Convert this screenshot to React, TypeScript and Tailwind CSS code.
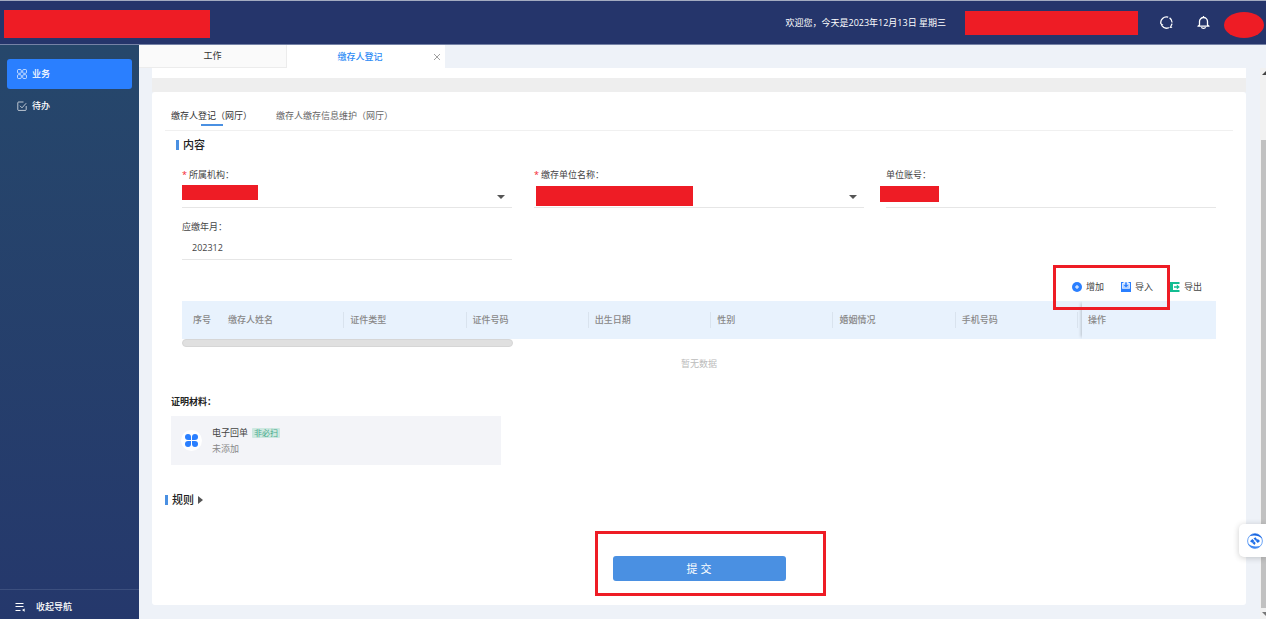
import { useState } from "react";
import type { ReactNode } from "react";

const COLUMNS = ["缴存人姓名", "证件类型", "证件号码", "出生日期", "性别", "婚姻情况", "手机号码"];

const FORM_TABS = ["缴存人登记（网厅）", "缴存人缴存信息维护（网厅）"];

function GridIcon() {
  return (
    <svg className="size-[10px]" viewBox="0 0 10 10" fill="none" stroke="currentColor" strokeWidth="0.7">
      <rect x="0.5" y="0.5" width="3.8" height="3.8" rx="1" />
      <rect x="5.7" y="0.5" width="3.8" height="3.8" rx="1" />
      <rect x="0.5" y="5.7" width="3.8" height="3.8" rx="1" />
      <rect x="5.7" y="5.7" width="3.8" height="3.8" rx="1" />
    </svg>
  );
}

function TodoIcon() {
  return (
    <svg className="size-[10px]" viewBox="0 0 10 10" fill="none" stroke="currentColor" strokeWidth="0.7">
      <path d="M6.5 1H1.6a.8.8 0 0 0-.8.8v6.800a.8.8 0 0 0 .8.8h6.800a.8.8 0 0 0 .8-.8V5" />
      <path d="M3 4.8l2 2 4.2-4.6" />
    </svg>
  );
}

function CollapseIcon() {
  return (
    <svg className="size-[10px]" viewBox="0 0 10 10" fill="none" stroke="currentColor">
      <path d="M0.5 1.5h8M0.5 4.5h8M0.5 8.5h5" />
      <path d="M9.6 6.4v3.4L7 8.1z" fill="currentColor" stroke="none" />
    </svg>
  );
}

function RefreshIcon() {
  return (
    <svg className="size-[13px]" viewBox="0 0 13 13" fill="none" stroke="currentColor" strokeWidth="1.3">
      <path d="M1 8A5.600 5.600 0 0 1 8.200 1.200" />
      <path d="M9.600 1.900A5.600 5.600 0 0 1 12.100 6.400" />
      <path d="M12 7.600A5.600 5.600 0 0 1 11 9.800" />
      <path d="M8.800 11.600A5.600 5.600 0 0 1 1.900 9.700" />
      <path d="M0.800 7.200l2.600 1.600-2.400 1.200zM12.400 11.800l-3.200.2 1.600-2.600z" fill="currentColor" stroke="none" />
    </svg>
  );
}

function BellIcon() {
  return (
    <svg className="size-[13px]" viewBox="0 0 13 13" fill="none" stroke="currentColor" strokeWidth="1.3">
      <path d="M6.5 0v1.500M2.500 9V5.500a4 4 0 0 1 8 0V9l1.500 1.200H1z" strokeLinejoin="round" />
      <path d="M4.400 11.300a2.200 1.500 0 0 0 4.200 0" />
    </svg>
  );
}

function AddIcon() {
  return (
    <svg className="size-[10px]" viewBox="0 0 10 10">
      <circle cx="5" cy="5" r="5" fill="#2a7fff" />
      <path d="M5 3v4M3 5h4" stroke="#fff" />
    </svg>
  );
}

function ImportIcon() {
  return (
    <svg className="size-[10px]" viewBox="0 0 10 10">
      <path d="M0 0h2.500v1H1.200v5.800h7.600V1H7.500V0H10v10H0z" fill="#2a7fff" />
      <path d="M2 1.800h1.600V0h2.800v1.800H8v4.400H2z" fill="#2a7fff" opacity="0.35" />
      <path d="M4.300 0.500h1.400v2.500h1.600L5 5.600 2.700 3h1.600z" fill="#2a7fff" />
    </svg>
  );
}

function ExportIcon() {
  return (
    <svg className="size-[10px]" viewBox="0 0 10 10">
      <path d="M0 0h9.500v2H3v6h6.500v2H0z" fill="#12bd92" />
      <path d="M4 4.200h2.800V2.600L9.800 5 6.800 7.400V5.800H4z" fill="#12bd92" />
    </svg>
  );
}

function CloverIcon() {
  return (
    <svg className="size-[13px]" viewBox="0 0 13 13" fill="#2a7fff">
      <path d="M3 0a3 3 0 0 1 3 3v3H3a3 3 0 0 1 0-6z" />
      <path d="M10 0a3 3 0 0 1 0 6H7V3a3 3 0 0 1 3-3z" />
      <path d="M3 7h3v3a3 3 0 1 1-3-3z" />
      <path d="M7 7h3a3 3 0 1 1-3 3z" />
    </svg>
  );
}

function AssistantIcon() {
  return (
    <svg className="size-4" viewBox="0 0 16 16" fill="none">
      <circle cx="8" cy="8" r="7.4" stroke="#5b9bf5" strokeWidth="0.9" />
      <path d="M2.500 3.200C5 .2 10-.4 13.200 2.800c1 1 1.600 2 1.900 3C12 2.600 7.500 1.800 2.500 3.200z" fill="#1764e0" />
      <path d="M13.500 12.800C11 15.800 6 16.400 2.800 13.200c-1-1-1.600-2-1.900-3C4 13.400 8.500 14.200 13.500 12.800z" fill="#3d87f2" />
      <path d="M3 8.300L5.400 6l2 2-2 2zM6.500 5.500L8.500 4.200l1.600 2.200-1.300 1.300zM7.200 8.400l1.500 1.500-1.200 2-2-1.600zM8.800 8l2-2L13 8.100l-2.200 2z" fill="#1f6fe8" />
    </svg>
  );
}

function SectionTitle({ children }: { children: ReactNode }) {
  return (
    <h2 className="flex items-center gap-1 text-[11px] leading-4 font-medium text-[#222]">
      <span className="w-[3px] h-[10px] bg-[#4a90e2]" />
      {children}
    </h2>
  );
}

function FieldLabel({ id, required, children }: { id: string; required?: boolean; children: ReactNode }) {
  return (
    <label htmlFor={id} className="flex gap-0.5 leading-4 text-[#444]">
      {required && <span className="text-[#f5222d]">*</span>}
      {children}
    </label>
  );
}

function Caret() {
  return (
    <svg className="absolute right-[7px] top-3 w-2 h-1 pointer-events-none" viewBox="0 0 8 4">
      <path d="M0 0h8L4 4z" fill="#555" />
    </svg>
  );
}

export default function App() {
  const [formTab, setFormTab] = useState(0);
  const [month, setMonth] = useState("202312");

  return (
    <div className="relative flex flex-col h-screen overflow-hidden bg-[#eef2f8] text-[9px] leading-4 text-[#444] font-['Open_Sans','Noto_Sans_CJK_SC',sans-serif]">
      <header className="flex items-start justify-between h-[45px] shrink-0 pl-1 pr-0.5 border-t border-t-[#a3abc0] border-b border-b-[#7582a6] bg-[#25356b] text-white">
        <div className="w-[206px] h-7 mt-[9px] bg-[#ee1c25]" />
        <div className="flex items-center h-[43px]">
          <span>欢迎您，今天是2023年12月13日 星期三</span>
          <div className="w-[173px] h-6 ml-[19px] mr-[22px] bg-[#ee1c25]" />
          <button type="button" aria-label="刷新" className="mr-6"><RefreshIcon /></button>
          <button type="button" aria-label="通知" className="mr-3.5"><BellIcon /></button>
          <div className="w-10 h-[26px] mt-1 rounded-[50%] bg-[#ee1c25]" />
        </div>
      </header>

      <div className="flex flex-1 min-h-0">
        <aside className="flex flex-col w-[139px] shrink-0 bg-linear-to-b from-[#26476b] to-[#25386c] text-white font-medium">
          <nav className="flex flex-col flex-1 gap-0.5 px-[7px] pt-3.5">
            <a href="#business" className="flex items-center gap-[5px] h-[30px] px-2.5 rounded-[3px] bg-[#2a7fff]">
              <GridIcon />
              业务
            </a>
            <a href="#todo" className="flex items-center gap-[5px] h-[30px] px-2.5">
              <TodoIcon />
              待办
            </a>
          </nav>
          <button type="button" className="flex items-center gap-[11px] h-[30px] px-[15px] border-t border-[#3c4f7e] pt-1">
            <CollapseIcon />
            收起导航
          </button>
        </aside>

        <main className="flex flex-col flex-1 min-w-0">
          <div className="flex h-[23px] shrink-0">
            <a href="#work" className="flex items-center justify-center w-[148px] border-r border-b border-[#ececec] bg-[#fafafa] text-[#333]">
              工作
            </a>
            <div className="flex items-center w-[158px] pr-1 bg-white">
              <a href="#register" className="flex-1 text-center font-medium text-[#2f8cf5]">缴存人登记</a>
              <button type="button" aria-label="关闭">
                <svg className="size-2" viewBox="0 0 8 8" stroke="#888" strokeWidth="0.8">
                  <path d="M1 1l6 6M7 1L1 7" />
                </svg>
              </button>
            </div>
          </div>

          <div className="flex flex-1 min-h-0">
            <div className="flex-1 min-w-0 pl-[13px] pr-3.5">
              <div className="h-2.5 bg-white" />
              <div className="h-3.5 bg-[#eee]" />

              <div className="px-[13px] pt-3.5 pb-6 rounded-[3px] bg-white">
                <div className="flex gap-3 h-[25px] border-b border-[#f0f0f0]">
                  {FORM_TABS.map((label, i) => (
                    <button
                      key={label}
                      type="button"
                      onClick={() => setFormTab(i)}
                      className={`relative h-5 px-1.5 ${formTab === i ? "text-[#333]" : "text-[#666]"}`}
                    >
                      {label}
                      {formTab === i && (
                        <span className="absolute left-1/2 bottom-0 w-[22px] h-0.5 -translate-x-1/2 bg-[#4a90e2]" />
                      )}
                    </button>
                  ))}
                </div>

                <div className="pl-[11px] pt-1.5">
                  <SectionTitle>内容</SectionTitle>
                </div>

                <div className="pl-[17px] pr-[17px] pt-3.5">
                  <div className="grid grid-cols-3 gap-x-[22px] gap-y-[11px]">
                    <div>
                      <FieldLabel id="org" required>所属机构：</FieldLabel>
                      <div className="relative">
                        <select id="org" className="block w-full h-[25px] appearance-none border-b border-[#e6e6e6]">
                          <option value="" />
                        </select>
                        <Caret />
                        <span className="absolute left-0 top-0.5 w-[76px] h-[15px] bg-[#ee1c25]" />
                      </div>
                    </div>
                    <div>
                      <FieldLabel id="company" required>缴存单位名称：</FieldLabel>
                      <div className="relative">
                        <select id="company" className="block w-full h-[25px] appearance-none border-b border-[#e6e6e6]">
                          <option value="" />
                        </select>
                        <Caret />
                        <span className="absolute left-0.5 top-[3px] w-[157px] h-5 bg-[#ee1c25]" />
                      </div>
                    </div>
                    <div>
                      <FieldLabel id="account">单位账号：</FieldLabel>
                      <div className="relative">
                        <input id="account" type="text" className="block w-full h-[25px] border-b border-[#e6e6e6]" />
                        <span className="absolute -left-1.5 top-[3px] w-[59px] h-4 bg-[#ee1c25]" />
                      </div>
                    </div>
                    <div>
                      <FieldLabel id="month">应缴年月：</FieldLabel>
                      <input
                        id="month"
                        type="text"
                        value={month}
                        onChange={(e) => setMonth(e.target.value)}
                        className="block w-full h-[25px] px-2.5 border-b border-[#e6e6e6]"
                      />
                    </div>
                  </div>

                  <div className="flex justify-end pt-[19px] pb-1.5 pr-3.5">
                    <div className="relative flex gap-[17px]">
                      <button type="button" className="flex items-center gap-1"><AddIcon />增加</button>
                      <button type="button" className="flex items-center gap-1"><ImportIcon />导入</button>
                      <button type="button" className="flex items-center gap-1"><ExportIcon />导出</button>
                      <span className="absolute -left-[19px] -top-3.5 z-10 w-[117px] h-[45px] border-3 border-[#ee1c25] pointer-events-none" />
                    </div>
                  </div>

                  <table className="w-full table-fixed text-left text-[#888]">
                    <thead>
                      <tr className="h-[38px] bg-[#e8f2fd]">
                        <th className="w-10 p-0 pl-[11px] font-medium">序号</th>
                        {COLUMNS.map((c) => (
                          <th key={c} className="p-0 font-medium">
                            <div className="pl-1.5 border-r border-[#d9e3ee]">{c}</div>
                          </th>
                        ))}
                        <th className="w-[138px] p-0 pl-1 font-medium">
                          <div className="flex items-center h-[38px] pl-1.5 bg-[#e8f2fd] shadow-[-3px_0_3px_-2px_rgba(0,0,0,0.2)]">操作</div>
                        </th>
                      </tr>
                    </thead>
                    <tbody>
                      <tr>
                        <td colSpan={9} className="p-0">
                          <div className="w-[331px] h-2 rounded-full border border-[#d6d6d6] bg-[#e0e0e0]" />
                          <div className="pt-[9px] text-center text-[#bbb]">暂无数据</div>
                        </td>
                      </tr>
                    </tbody>
                  </table>
                </div>

                <div className="pl-1.5 pt-[22px]">
                  <h3 className="font-bold text-[#222]">证明材料：</h3>
                  <div className="flex items-center gap-2.5 w-[330px] h-[49px] mt-1.5 pl-2.5 bg-[#f3f4f8]">
                    <span className="flex items-center justify-center size-[21px] rounded-full bg-white">
                      <CloverIcon />
                    </span>
                    <div>
                      <div className="flex items-center gap-1">
                        电子回单
                        <span className="px-0.5 rounded-[1px] bg-[#cde8e0] text-[8px] leading-[10px] text-[#45a88c]">非必扫</span>
                      </div>
                      <div className="text-[#888]">未添加</div>
                    </div>
                  </div>
                </div>

                <button type="button" className="flex items-center gap-1 mt-[27px]">
                  <SectionTitle>规则</SectionTitle>
                  <svg className="w-[5px] h-2" viewBox="0 0 5 8" fill="#555">
                    <path d="M0 0l5 4-5 4z" />
                  </svg>
                </button>

                <div className="flex justify-center pt-12">
                  <div className="relative">
                    <button type="submit" className="block w-[173px] h-[25px] rounded-[3px] bg-[#4a90e2] text-[11px] text-white">
                      提 交
                    </button>
                    <span className="absolute -left-[18px] -top-[25px] w-[231px] h-[65px] border-3 border-[#ee1c25] pointer-events-none" />
                  </div>
                </div>
              </div>
            </div>

            {/* Page scrollbar */}
            <div className="flex flex-col items-center w-1.5 shrink-0 bg-[#f1f1f1]">
              <svg className="w-1.5 h-[72px]" viewBox="0 0 6 72">
                <path d="M2 7l4-4v4z" fill="#444" />
              </svg>
              <div className="flex-1 w-full border-l border-[#f1f1f1] bg-[#c1c1c1]" />
              <svg className="w-1.5 h-[11px]" viewBox="0 0 6 11">
                <path d="M2 4h4v4z" fill="#777" />
              </svg>
            </div>
          </div>
        </main>
      </div>

      <button
        type="button"
        aria-label="助手"
        className="absolute right-0 bottom-[62px] flex items-center w-[27px] h-[33px] pl-2 rounded-l-[5px] bg-white shadow-[0_1px_6px_rgba(0,0,0,0.2)]"
      >
        <AssistantIcon />
      </button>
    </div>
  );
}
